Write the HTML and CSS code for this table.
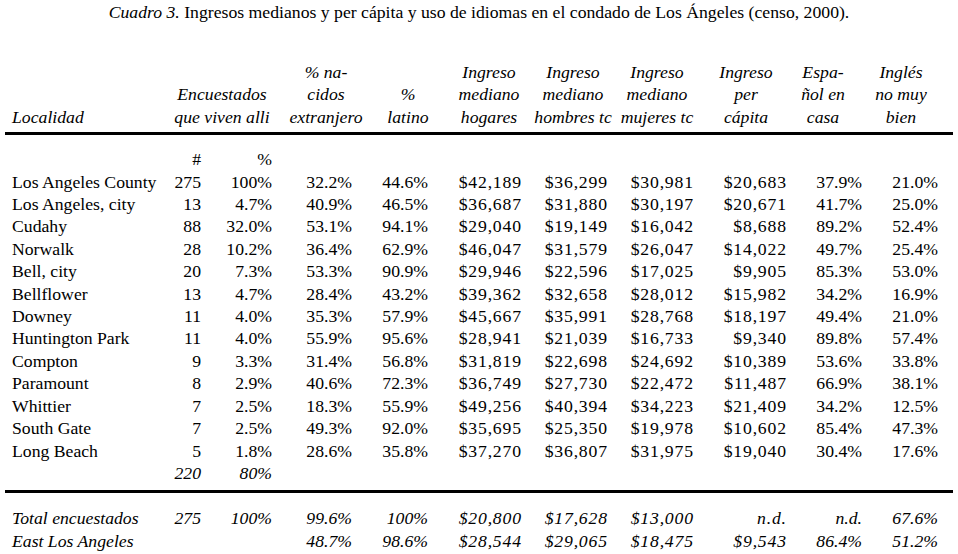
FILE: index.html
```html
<!DOCTYPE html>
<html lang="es">
<head>
<meta charset="utf-8">
<title>Cuadro 3</title>
<link rel="stylesheet" href="styles.css">
</head>
<body>
<div class="page">
  <p class="caption"><em>Cuadro 3.</em> Ingresos medianos y per cápita y uso de idiomas en el condado de Los Ángeles (censo, 2000).</p>

  <div class="table">
    <div class="grid head">
      <div class="h h-loc"><span>Localidad</span></div>
      <div class="h h-enc"><span>Encuestados</span><span>que viven alli</span></div>
      <div class="h h-nac"><span>% na-</span><span>cidos</span><span>extranjero</span></div>
      <div class="h h-lat"><span>%</span><span>latino</span></div>
      <div class="h h-hog"><span>Ingreso</span><span>mediano</span><span>hogares</span></div>
      <div class="h h-hom"><span>Ingreso</span><span>mediano</span><span>hombres tc</span></div>
      <div class="h h-muj"><span>Ingreso</span><span>mediano</span><span>mujeres tc</span></div>
      <div class="h h-pc"><span>Ingreso</span><span>per</span><span>cápita</span></div>
      <div class="h h-esp"><span>Espa-</span><span>ñol en</span><span>casa</span></div>
      <div class="h h-ing"><span>Inglés</span><span>no muy</span><span>bien</span></div>
    </div>

    <div class="rule"></div>

    <div class="grid body">
      <div class="c loc"></div><div class="c">#</div><div class="c">%</div><div class="c"></div><div class="c"></div><div class="c"></div><div class="c"></div><div class="c"></div><div class="c"></div><div class="c"></div><div class="c"></div>

      <div class="c loc">Los Angeles County</div><div class="c">275</div><div class="c">100%</div><div class="c">32.2%</div><div class="c">44.6%</div><div class="c">$42,189</div><div class="c">$36,299</div><div class="c">$30,981</div><div class="c">$20,683</div><div class="c">37.9%</div><div class="c">21.0%</div>
      <div class="c loc">Los Angeles, city</div><div class="c">13</div><div class="c">4.7%</div><div class="c">40.9%</div><div class="c">46.5%</div><div class="c">$36,687</div><div class="c">$31,880</div><div class="c">$30,197</div><div class="c">$20,671</div><div class="c">41.7%</div><div class="c">25.0%</div>
      <div class="c loc">Cudahy</div><div class="c">88</div><div class="c">32.0%</div><div class="c">53.1%</div><div class="c">94.1%</div><div class="c">$29,040</div><div class="c">$19,149</div><div class="c">$16,042</div><div class="c">$8,688</div><div class="c">89.2%</div><div class="c">52.4%</div>
      <div class="c loc">Norwalk</div><div class="c">28</div><div class="c">10.2%</div><div class="c">36.4%</div><div class="c">62.9%</div><div class="c">$46,047</div><div class="c">$31,579</div><div class="c">$26,047</div><div class="c">$14,022</div><div class="c">49.7%</div><div class="c">25.4%</div>
      <div class="c loc">Bell, city</div><div class="c">20</div><div class="c">7.3%</div><div class="c">53.3%</div><div class="c">90.9%</div><div class="c">$29,946</div><div class="c">$22,596</div><div class="c">$17,025</div><div class="c">$9,905</div><div class="c">85.3%</div><div class="c">53.0%</div>
      <div class="c loc">Bellflower</div><div class="c">13</div><div class="c">4.7%</div><div class="c">28.4%</div><div class="c">43.2%</div><div class="c">$39,362</div><div class="c">$32,658</div><div class="c">$28,012</div><div class="c">$15,982</div><div class="c">34.2%</div><div class="c">16.9%</div>
      <div class="c loc">Downey</div><div class="c">11</div><div class="c">4.0%</div><div class="c">35.3%</div><div class="c">57.9%</div><div class="c">$45,667</div><div class="c">$35,991</div><div class="c">$28,768</div><div class="c">$18,197</div><div class="c">49.4%</div><div class="c">21.0%</div>
      <div class="c loc">Huntington Park</div><div class="c">11</div><div class="c">4.0%</div><div class="c">55.9%</div><div class="c">95.6%</div><div class="c">$28,941</div><div class="c">$21,039</div><div class="c">$16,733</div><div class="c">$9,340</div><div class="c">89.8%</div><div class="c">57.4%</div>
      <div class="c loc">Compton</div><div class="c">9</div><div class="c">3.3%</div><div class="c">31.4%</div><div class="c">56.8%</div><div class="c">$31,819</div><div class="c">$22,698</div><div class="c">$24,692</div><div class="c">$10,389</div><div class="c">53.6%</div><div class="c">33.8%</div>
      <div class="c loc">Paramount</div><div class="c">8</div><div class="c">2.9%</div><div class="c">40.6%</div><div class="c">72.3%</div><div class="c">$36,749</div><div class="c">$27,730</div><div class="c">$22,472</div><div class="c">$11,487</div><div class="c">66.9%</div><div class="c">38.1%</div>
      <div class="c loc">Whittier</div><div class="c">7</div><div class="c">2.5%</div><div class="c">18.3%</div><div class="c">55.9%</div><div class="c">$49,256</div><div class="c">$40,394</div><div class="c">$34,223</div><div class="c">$21,409</div><div class="c">34.2%</div><div class="c">12.5%</div>
      <div class="c loc">South Gate</div><div class="c">7</div><div class="c">2.5%</div><div class="c">49.3%</div><div class="c">92.0%</div><div class="c">$35,695</div><div class="c">$25,350</div><div class="c">$19,978</div><div class="c">$10,602</div><div class="c">85.4%</div><div class="c">47.3%</div>
      <div class="c loc">Long Beach</div><div class="c">5</div><div class="c">1.8%</div><div class="c">28.6%</div><div class="c">35.8%</div><div class="c">$37,270</div><div class="c">$36,807</div><div class="c">$31,975</div><div class="c">$19,040</div><div class="c">30.4%</div><div class="c">17.6%</div>
      <div class="c loc"></div><div class="c it">220</div><div class="c it">80%</div><div class="c"></div><div class="c"></div><div class="c"></div><div class="c"></div><div class="c"></div><div class="c"></div><div class="c"></div><div class="c"></div>
    </div>

    <div class="rule rule-lower"></div>

    <div class="grid body totals">
      <div class="c loc">Total encuestados</div><div class="c">275</div><div class="c">100%</div><div class="c">99.6%</div><div class="c">100%</div><div class="c">$20,800</div><div class="c">$17,628</div><div class="c">$13,000</div><div class="c">n.d.</div><div class="c">n.d.</div><div class="c">67.6%</div>
      <div class="c loc">East Los Angeles</div><div class="c"></div><div class="c"></div><div class="c">48.7%</div><div class="c">98.6%</div><div class="c">$28,544</div><div class="c">$29,065</div><div class="c">$18,475</div><div class="c">$9,543</div><div class="c">86.4%</div><div class="c">51.2%</div>
    </div>
  </div>
</div>
</body>
</html>
```

FILE: styles.css
```css
html, body {
  margin: 0;
  padding: 0;
  background: #ffffff;
}

body {
  font-family: "Liberation Serif", "DejaVu Serif", "Times New Roman", serif;
  font-size: 17.7px;
  color: #000000;
  width: 958px;
}

.caption {
  margin: 0;
  padding-top: 1px;
  line-height: 22px;
  text-align: center;
}

.caption em {
  font-style: italic;
}

.table {
  padding: 0 5px;
  margin-top: 38px;
}

.grid {
  display: grid;
  grid-template-columns: 158px 31px 71px 80px 76px 93px 86px 86px 93px 76px 76px;
  padding-left: 7px;
  line-height: 22.4px;
}

.head {
  align-items: end;
  font-style: italic;
}

.h {
  display: flex;
  flex-direction: column;
  align-items: center;
  white-space: nowrap;
}

.h-loc {
  align-items: flex-start;
}

.h-enc {
  grid-column: span 2;
  padding-left: 2px;
}

.h-nac { padding-left: 28px; }
.h-lat { padding-left: 36px; }
.h-hog { padding-left: 29px; }
.h-hom { padding-left: 18px; }
.h-muj { padding-left: 14px; }
.h-pc  { padding-left: 13px; }
.h-esp { padding-right: 2px; }
.h-ing { padding-left: 2px; }

.rule {
  height: 3px;
  background: #000000;
  margin-top: 4px;
}

.body {
  margin-top: 13px;
}

.c {
  text-align: right;
  white-space: nowrap;
  min-height: 22.4px;
}

/* currency columns: slightly wider figure spacing */
.body .c:nth-child(11n+6),
.body .c:nth-child(11n+7),
.body .c:nth-child(11n+8),
.body .c:nth-child(11n+9) {
  letter-spacing: 0.8px;
  margin-right: -0.8px;
}

.c.loc {
  text-align: left;
}

.it {
  font-style: italic;
}

.rule-lower {
  margin-top: 6px;
}

.totals {
  margin-top: 14px;
  font-style: italic;
}
```
